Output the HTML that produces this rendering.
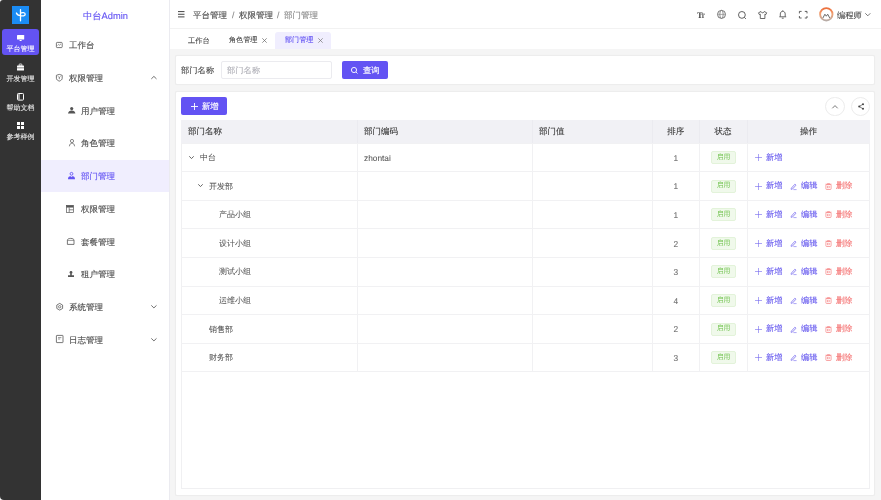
<!DOCTYPE html>
<html><head><meta charset="utf-8">
<style>
*{box-sizing:border-box;margin:0;padding:0}
html,body{width:881px;height:500px;overflow:hidden;background:#f5f5f5;font-family:"Liberation Sans",sans-serif;color:#606266}
.a{position:absolute}
.t{position:absolute;white-space:nowrap;line-height:1;text-rendering:geometricPrecision;-webkit-text-stroke:0.12px currentColor;will-change:transform}
svg{position:absolute;overflow:visible}
.card{position:absolute;background:#fff;border:1px solid #ededed;border-radius:2px;box-shadow:0 0 1px rgba(0,0,0,0.04)}
</style></head><body>

<div class="a" style="left:0;top:0;width:41px;height:500px;background:#fff"></div>
<div class="a" style="left:0;top:0;width:41px;height:500px;background:#333;border-radius:3px 0 0 4px"></div>
<div class="a" style="left:11.5px;top:5.5px;width:17.5px;height:18px;background:#1b8cf5"></div>
<svg style="left:11.5px;top:5.5px" width="17.5" height="18" viewBox="0 0 17.5 18"><path d="M8.5 3.6V14.8M4.4 7Q5.2 9.6 8.5 9.6M8.5 7.2C10 6.2 13.2 6.2 13.2 8.2 13.2 10 10.5 10.2 8.5 9.6" fill="none" stroke="#fff" stroke-width="1.3" stroke-linecap="round"/></svg>
<div class="a" style="left:2px;top:29px;width:37px;height:26px;background:#6353f3;border-radius:3px"></div>
<div class="t" style="left:0px;top:45.76px;font-size:7px;color:#fff;width:41px;text-align:center;-webkit-text-stroke:0.08px currentColor">平台管理</div>
<div class="t" style="left:0px;top:75.96px;font-size:7px;color:#ececec;width:41px;text-align:center;-webkit-text-stroke:0.08px currentColor">开发管理</div>
<div class="t" style="left:0px;top:104.56px;font-size:7px;color:#ececec;width:41px;text-align:center;-webkit-text-stroke:0.08px currentColor">帮助文档</div>
<div class="t" style="left:0px;top:133.86px;font-size:7px;color:#ececec;width:41px;text-align:center;-webkit-text-stroke:0.08px currentColor">参考样例</div>
<svg style="left:16.8px;top:34.6px" width="7.2" height="6"><rect x="0" y="0" width="7.2" height="4.6" rx="0.6" fill="#fff"/><rect x="2.6" y="5" width="2" height="1" fill="#fff"/></svg>
<svg style="left:17px;top:64.3px" width="7" height="6.5"><rect x="0" y="1.6" width="7" height="4.9" rx="0.6" fill="#fff"/><rect x="2.2" y="0" width="2.6" height="2" rx="0.4" fill="none" stroke="#fff" stroke-width="0.8"/><rect x="0" y="3.6" width="7" height="0.6" fill="#323232"/></svg>
<svg style="left:17px;top:93px" width="7" height="7.6"><rect x="0.5" y="0.5" width="6" height="6.6" rx="0.8" fill="none" stroke="#fff" stroke-width="1"/><rect x="1.5" y="1" width="1" height="5.6" fill="#fff"/></svg>
<svg style="left:17px;top:121.5px" width="7" height="7"><rect x="0" y="0" width="3" height="3" fill="#fff"/><rect x="4" y="0" width="3" height="3" fill="#fff"/><rect x="0" y="4" width="3" height="3" fill="#fff"/><rect x="4" y="4" width="3" height="3" fill="#fff"/></svg>
<div class="a" style="left:41px;top:0;width:129px;height:500px;background:#fff;border-right:1px solid #ebebf0"></div>
<div class="t" style="left:82.8px;top:11.69px;font-size:9.3px;color:#6353f3;">中台Admin</div>
<div class="t" style="left:69.2px;top:41.33px;font-size:8.5px;color:#4a4a4a;">工作台</div>
<svg style="left:56.2px;top:41.9px" width="6.6" height="6"><rect x="0.4" y="0.4" width="5.8" height="5.2" rx="0.8" fill="none" stroke="#555" stroke-width="0.8"/><path d="M1.6 3.6L2.6 2.4L3.6 3.2L5 1.8" fill="none" stroke="#555" stroke-width="0.6"/></svg>
<div class="t" style="left:69.2px;top:74.05px;font-size:8.5px;color:#4a4a4a;">权限管理</div>
<svg style="left:56.2px;top:73.9px" width="6.6" height="7.4"><path d="M3.3 0.4L6.2 1.3V4.3C6.2 5.6 4.9 6.6 3.3 7.1 1.7 6.6 0.4 5.6 0.4 4.3V1.3Z" fill="none" stroke="#555" stroke-width="0.8"/><path d="M2.2 2.4L3.3 3.6L4.4 2.4M3.3 3.6V5.2" fill="none" stroke="#555" stroke-width="0.7"/></svg>
<svg style="left:151px;top:76.0px" width="5.8" height="3.3"><path d="M0.3 2.9L2.9 0.4L5.5 2.9" fill="none" stroke="#555" stroke-width="0.85"/></svg>
<div class="t" style="left:81.2px;top:106.77px;font-size:8.5px;color:#4a4a4a;">用户管理</div>
<svg style="left:67.6px;top:107.0px" width="7.4" height="6.6"><circle cx="3.7" cy="1.6" r="1.6" fill="#555"/><path d="M0 6.6C0.3 4.6 1.6 3.6 3.7 3.6 5.8 3.6 7.1 4.6 7.4 6.6Z" fill="#555"/></svg>
<div class="t" style="left:81.2px;top:139.49px;font-size:8.5px;color:#4a4a4a;">角色管理</div>
<svg style="left:68.5px;top:139.4px" width="6" height="7.5"><circle cx="3" cy="2" r="1.6" fill="none" stroke="#555" stroke-width="0.7"/><path d="M0.4 7.3C0.6 5.2 1.6 4.2 3 4.2 4.4 4.2 5.4 5.2 5.6 7.3" fill="none" stroke="#555" stroke-width="0.7"/></svg>
<div class="a" style="left:41px;top:160px;width:128px;height:32px;background:#f0eefe"></div>
<div class="t" style="left:81.2px;top:172.21px;font-size:8.5px;color:#6353f3;">部门管理</div>
<svg style="left:67.8px;top:172.2px" width="7" height="7.2"><circle cx="3.5" cy="1.8" r="1.4" fill="none" stroke="#6353f3" stroke-width="0.9"/><path d="M0 7.2C0 5.2 0.8 4.2 2.1 4.2 2.9 4.2 3.3 4.7 3.5 5.2 3.7 4.7 4.1 4.2 4.9 4.2 6.2 4.2 7 5.2 7 7.2Z" fill="#6353f3"/></svg>
<div class="t" style="left:81.2px;top:204.93px;font-size:8.5px;color:#4a4a4a;">权限管理</div>
<svg style="left:66.3px;top:204.7px" width="7.7" height="7.7"><rect x="0.35" y="0.35" width="7" height="7" fill="none" stroke="#555" stroke-width="0.7"/><rect x="0.35" y="0.35" width="7" height="2.2" fill="#555"/><path d="M3.2 2.5V7.3M3.2 4.8H7.3" stroke="#555" stroke-width="0.7"/></svg>
<div class="t" style="left:81.2px;top:237.65px;font-size:8.5px;color:#4a4a4a;">套餐管理</div>
<svg style="left:67px;top:237.8px" width="7.4" height="6.8"><path d="M0.4 2.2C0.4 1.2 1.6 0.4 3.7 0.4 5.8 0.4 7 1.2 7 2.2V6.4H0.4Z" fill="none" stroke="#555" stroke-width="0.8"/><path d="M0.4 2.4H7" stroke="#555" stroke-width="0.6"/></svg>
<div class="t" style="left:81.2px;top:270.37px;font-size:8.5px;color:#4a4a4a;">租户管理</div>
<svg style="left:68px;top:270.9px" width="6" height="6"><circle cx="3" cy="1.5" r="1.4" fill="#555"/><path d="M2.2 2.6H3.8V4.2H6V6H0V4.2H2.2Z" fill="#555"/></svg>
<div class="t" style="left:69.2px;top:303.09px;font-size:8.5px;color:#4a4a4a;">系统管理</div>
<svg style="left:55.8px;top:302.9px" width="7.4" height="7.5"><path d="M3.7 0.4L6.6 2.05V5.45L3.7 7.1L0.8 5.45V2.05Z" fill="none" stroke="#555" stroke-width="0.8"/><circle cx="3.7" cy="3.75" r="1.2" fill="none" stroke="#555" stroke-width="0.7"/></svg>
<svg style="left:151px;top:305.1px" width="5.8" height="3.3"><path d="M0.3 0.4L2.9 2.9L5.5 0.4" fill="none" stroke="#555" stroke-width="0.85"/></svg>
<div class="t" style="left:69.2px;top:335.81px;font-size:8.5px;color:#4a4a4a;">日志管理</div>
<svg style="left:55.8px;top:335.4px" width="7.4" height="8"><rect x="0.4" y="0.4" width="6.6" height="7.2" rx="0.5" fill="none" stroke="#555" stroke-width="0.8"/><path d="M2 2.6H5.4M2 4H4.2" stroke="#555" stroke-width="0.6"/></svg>
<svg style="left:151px;top:337.8px" width="5.8" height="3.3"><path d="M0.3 0.4L2.9 2.9L5.5 0.4" fill="none" stroke="#555" stroke-width="0.85"/></svg>
<div class="a" style="left:170px;top:0;width:711px;height:29px;background:#fff;border-bottom:1px solid #f2f2f2"></div>
<svg style="left:178px;top:11.2px" width="6.5" height="6.5"><path d="M0 0.6H6.5M0 3.25H6.5M0 5.9H6.5" stroke="#444" stroke-width="1"/></svg>
<div class="t" style="left:193px;top:10.53px;font-size:8.5px;color:#4a4a4a;">平台管理</div>
<div class="t" style="left:231.5px;top:10.53px;font-size:8.5px;color:#888;">/</div>
<div class="t" style="left:239px;top:10.53px;font-size:8.5px;color:#4a4a4a;">权限管理</div>
<div class="t" style="left:277.2px;top:10.53px;font-size:8.5px;color:#888;">/</div>
<div class="t" style="left:284px;top:10.53px;font-size:8.5px;color:#8a8a8a;">部门管理</div>
<div class="t" style="left:696.5px;top:11.3px;font-family:'Liberation Serif',serif;font-weight:bold;font-size:8.5px;color:#444;-webkit-text-stroke:0"><span style="letter-spacing:-1.9px">T</span><span style="font-size:6.5px">T</span></div>
<svg style="left:717px;top:10.4px" width="9" height="9"><circle cx="4.5" cy="4.4" r="4" fill="none" stroke="#666" stroke-width="0.9"/><ellipse cx="4.5" cy="4.4" rx="1.7" ry="4" fill="none" stroke="#777" stroke-width="0.8"/><path d="M0.6 4.4H8.4" stroke="#888" stroke-width="0.7"/></svg>
<svg style="left:737.7px;top:10.6px" width="8.5" height="8.5"><circle cx="3.9" cy="3.9" r="3.4" fill="none" stroke="#444" stroke-width="0.85"/><path d="M6.4 6.4L7.9 7.9" stroke="#444" stroke-width="0.85"/></svg>
<svg style="left:758px;top:10.6px" width="9.2" height="8"><path d="M3 0.5L0.5 1.8L1.4 3.6L2.3 3.2V7.5H6.9V3.2L7.8 3.6L8.7 1.8L6.2 0.5C5.9 1.4 5.3 1.8 4.6 1.8 3.9 1.8 3.3 1.4 3 0.5Z" fill="none" stroke="#444" stroke-width="0.8" stroke-linejoin="round"/></svg>
<svg style="left:779px;top:10px" width="7.5" height="8.8"><path d="M3.75 0.4V1.2M1.3 6.6V4C1.3 2.4 2.3 1.3 3.75 1.3 5.2 1.3 6.2 2.4 6.2 4V6.6M0.3 6.8H7.2M2.8 8.2H4.7" fill="none" stroke="#444" stroke-width="0.8"/></svg>
<svg style="left:798.8px;top:10.8px" width="8.4" height="7.4"><path d="M0.4 2.4V0.4H2.6M5.8 0.4H8V2.4M8 5V7H5.8M2.6 7H0.4V5" fill="none" stroke="#444" stroke-width="0.85"/></svg>
<svg style="left:819px;top:6.6px" width="14.6" height="14.6" viewBox="0 0 14.6 14.6"><defs><linearGradient id="ag" x1="0" y1="0" x2="0" y2="1"><stop offset="0" stop-color="#ec6f3c"/><stop offset="0.45" stop-color="#f3a070"/><stop offset="1" stop-color="#b8aca6"/></linearGradient></defs><circle cx="7.3" cy="7.3" r="6.2" fill="#fff" stroke="url(#ag)" stroke-width="1.9"/><path d="M3.9 11L5.9 7.2L7.3 9.2L8.7 7.2L10.7 11" fill="none" stroke="#6a6a6a" stroke-width="1"/></svg>
<div class="t" style="left:837px;top:11.41px;font-size:8.3px;color:#4a4a4a;">编程师</div>
<svg style="left:865.4px;top:12.5px" width="5.6" height="3.2"><path d="M0.3 0.3L2.8 2.8L5.3 0.3" fill="none" stroke="#555" stroke-width="0.8"/></svg>
<div class="a" style="left:170px;top:29px;width:711px;height:20px;background:#fff"></div>
<div class="t" style="left:188.4px;top:36.98px;font-size:7.2px;color:#4a4a4a;">工作台</div>
<div class="t" style="left:229.4px;top:37.02px;font-size:7.1px;color:#4a4a4a;">角色管理</div>
<svg style="left:262px;top:37.6px" width="5" height="5"><path d="M0.3 0.3L4.7 4.7M4.7 0.3L0.3 4.7" stroke="#666" stroke-width="0.7"/></svg>
<div class="a" style="left:275px;top:32px;width:56px;height:17px;background:#f0eefe;border-radius:3px 3px 0 0"></div>
<div class="t" style="left:285px;top:37.02px;font-size:7.1px;color:#6353f3;">部门管理</div>
<svg style="left:318.1px;top:37.6px" width="5" height="5"><path d="M0.3 0.3L4.7 4.7M4.7 0.3L0.3 4.7" stroke="#777" stroke-width="0.7"/></svg>
<div class="card" style="left:175px;top:54.5px;width:700px;height:30.5px"></div>
<div class="t" style="left:181px;top:66.11px;font-size:8.3px;color:#4a4a4a;">部门名称</div>
<div class="a" style="left:221px;top:61px;width:111px;height:18px;border:1px solid #ebebef;border-radius:2px;background:#fff"></div>
<div class="t" style="left:226.7px;top:66.31px;font-size:8.3px;color:#b0b0b8;">部门名称</div>
<div class="a" style="left:342px;top:61px;width:46px;height:18px;background:#6353f3;border-radius:2px"></div>
<svg style="left:351px;top:66.5px" width="7" height="7"><circle cx="3" cy="3" r="2.6" fill="none" stroke="#fff" stroke-width="0.9"/><path d="M5 5L6.5 6.5" stroke="#fff" stroke-width="0.9"/></svg>
<div class="t" style="left:362.8px;top:66.31px;font-size:8.3px;color:#fff;-webkit-text-stroke:0.15px #fff">查询</div>
<div class="card" style="left:175px;top:90.5px;width:700px;height:405px"></div>
<div class="a" style="left:181px;top:97px;width:46px;height:18px;background:#6353f3;border-radius:2px"></div>
<svg style="left:190.6px;top:102.6px" width="7" height="7"><path d="M3.5 0V7M0 3.5H7" stroke="#fff" stroke-width="0.9"/></svg>
<div class="t" style="left:201.9px;top:102.01px;font-size:8.3px;color:#fff;-webkit-text-stroke:0.15px #fff">新增</div>
<div class="a" style="left:825.4px;top:96.7px;width:19.2px;height:19.2px;border:1px solid #ececec;border-radius:50%;background:#fff"></div>
<div class="a" style="left:851.0px;top:96.7px;width:19.2px;height:19.2px;border:1px solid #ececec;border-radius:50%;background:#fff"></div>
<svg style="left:832px;top:104.5px" width="6" height="4"><path d="M0.3 3.3L3 0.6L5.7 3.3" fill="none" stroke="#555" stroke-width="0.8"/></svg>
<svg style="left:857.5px;top:103px" width="6.5" height="7"><circle cx="5" cy="1.2" r="1" fill="#444"/><circle cx="1.2" cy="3.5" r="1" fill="#444"/><circle cx="5" cy="5.8" r="1" fill="#444"/><path d="M5 1.2L1.2 3.5L5 5.8" fill="none" stroke="#444" stroke-width="0.7"/></svg>
<div class="a" style="left:181px;top:120px;width:689px;height:369px;border:1px solid #f0f0f2;background:#fff"></div>
<div class="a" style="left:181px;top:120px;width:689px;height:23px;background:#f1f1f5"></div>
<div class="a" style="left:356.5px;top:143px;width:1px;height:228.8px;background:#f1f1f3"></div>
<div class="a" style="left:356.5px;top:120px;width:1px;height:23px;background:#ebebf0"></div>
<div class="a" style="left:531.5px;top:143px;width:1px;height:228.8px;background:#f1f1f3"></div>
<div class="a" style="left:531.5px;top:120px;width:1px;height:23px;background:#ebebf0"></div>
<div class="a" style="left:651.5px;top:143px;width:1px;height:228.8px;background:#f1f1f3"></div>
<div class="a" style="left:651.5px;top:120px;width:1px;height:23px;background:#ebebf0"></div>
<div class="a" style="left:699px;top:143px;width:1px;height:228.8px;background:#f1f1f3"></div>
<div class="a" style="left:699px;top:120px;width:1px;height:23px;background:#ebebf0"></div>
<div class="a" style="left:747px;top:143px;width:1px;height:228.8px;background:#f1f1f3"></div>
<div class="a" style="left:747px;top:120px;width:1px;height:23px;background:#ebebf0"></div>
<div class="a" style="left:181px;top:142.5px;width:689px;height:1px;background:#f1f1f3"></div>
<div class="a" style="left:181px;top:171.1px;width:689px;height:1px;background:#f1f1f3"></div>
<div class="a" style="left:181px;top:199.7px;width:689px;height:1px;background:#f1f1f3"></div>
<div class="a" style="left:181px;top:228.3px;width:689px;height:1px;background:#f1f1f3"></div>
<div class="a" style="left:181px;top:256.9px;width:689px;height:1px;background:#f1f1f3"></div>
<div class="a" style="left:181px;top:285.5px;width:689px;height:1px;background:#f1f1f3"></div>
<div class="a" style="left:181px;top:314.1px;width:689px;height:1px;background:#f1f1f3"></div>
<div class="a" style="left:181px;top:342.7px;width:689px;height:1px;background:#f1f1f3"></div>
<div class="a" style="left:181px;top:371.3px;width:689px;height:1px;background:#f1f1f3"></div>
<div class="t" style="left:187.8px;top:127.13px;font-size:8.5px;color:#3a3a3a;">部门名称</div>
<div class="t" style="left:364px;top:127.13px;font-size:8.5px;color:#3a3a3a;">部门编码</div>
<div class="t" style="left:538.8px;top:127.13px;font-size:8.5px;color:#3a3a3a;">部门值</div>
<div class="t" style="left:651.5px;top:127.13px;font-size:8.5px;color:#3a3a3a;width:47.5px;text-align:center;">排序</div>
<div class="t" style="left:699px;top:127.13px;font-size:8.5px;color:#3a3a3a;width:48px;text-align:center;">状态</div>
<div class="t" style="left:747px;top:127.13px;font-size:8.5px;color:#3a3a3a;width:123px;text-align:center;">操作</div>
<div class="t" style="left:200.0px;top:153.94px;font-size:8px;color:#555;-webkit-text-stroke:0.05px currentColor">中台</div>
<svg style="left:188.8px;top:155.8px" width="5" height="3"><path d="M0.3 0.3L2.5 2.6L4.7 0.3" fill="none" stroke="#666" stroke-width="1"/></svg>
<div class="t" style="left:364px;top:153.81px;font-size:8.3px;color:#555;-webkit-text-stroke:0.05px currentColor">zhontai</div>
<div class="t" style="left:651.5px;top:153.81px;font-size:8.3px;color:#666;width:47.5px;text-align:center;-webkit-text-stroke:0.05px currentColor">1</div>
<div class="a" style="left:711px;top:151.0px;width:25px;height:13px;background:#f0f9eb;border:1px solid #e3f3da;border-radius:2px"></div>
<div class="t" style="left:711px;top:154.84px;font-size:6.8px;color:#6ac046;width:25px;text-align:center;-webkit-text-stroke:0">启用</div>
<svg style="left:755px;top:154.0px" width="7" height="7"><path d="M3.5 0V7M0 3.5H7" stroke="#7468ee" stroke-width="0.6"/></svg>
<div class="t" style="left:766.3px;top:153.86px;font-size:8.2px;color:#6558ee;-webkit-text-stroke:0.1px currentColor">新增</div>
<div class="t" style="left:209.4px;top:182.54px;font-size:8px;color:#555;-webkit-text-stroke:0.05px currentColor">开发部</div>
<svg style="left:198.2px;top:184.4px" width="5" height="3"><path d="M0.3 0.3L2.5 2.6L4.7 0.3" fill="none" stroke="#666" stroke-width="1"/></svg>
<div class="t" style="left:651.5px;top:182.41px;font-size:8.3px;color:#666;width:47.5px;text-align:center;-webkit-text-stroke:0.05px currentColor">1</div>
<div class="a" style="left:711px;top:179.6px;width:25px;height:13px;background:#f0f9eb;border:1px solid #e3f3da;border-radius:2px"></div>
<div class="t" style="left:711px;top:183.44px;font-size:6.8px;color:#6ac046;width:25px;text-align:center;-webkit-text-stroke:0">启用</div>
<svg style="left:755px;top:182.6px" width="7" height="7"><path d="M3.5 0V7M0 3.5H7" stroke="#7468ee" stroke-width="0.6"/></svg>
<div class="t" style="left:766.3px;top:182.46px;font-size:8.2px;color:#6558ee;-webkit-text-stroke:0.1px currentColor">新增</div>
<svg style="left:790px;top:182.5px" width="7" height="7"><path d="M1.3 5.2L4.9 1.2L6 2.2L2.4 6.1L1.1 6.3Z" fill="none" stroke="#7468ee" stroke-width="0.75"/><path d="M3.4 6.6H6.6" stroke="#7468ee" stroke-width="0.6"/></svg>
<div class="t" style="left:800.8px;top:182.46px;font-size:8.2px;color:#6558ee;-webkit-text-stroke:0.1px currentColor">编辑</div>
<svg style="left:825.4px;top:182.5px" width="7" height="7"><path d="M0.4 1.2H6.6M2.5 1.2V0.5H4.5V1.2" fill="none" stroke="#f58080" stroke-width="0.6"/><rect x="0.9" y="1.5" width="5.2" height="5" rx="0.8" fill="none" stroke="#f58080" stroke-width="0.7"/><rect x="2.4" y="3.1" width="2.2" height="1.8" fill="none" stroke="#f58080" stroke-width="0.5"/></svg>
<div class="t" style="left:836.1px;top:182.46px;font-size:8.2px;color:#f47474;-webkit-text-stroke:0.1px currentColor">删除</div>
<div class="t" style="left:218.8px;top:211.14px;font-size:8px;color:#555;-webkit-text-stroke:0.05px currentColor">产品小组</div>
<div class="t" style="left:651.5px;top:211.01px;font-size:8.3px;color:#666;width:47.5px;text-align:center;-webkit-text-stroke:0.05px currentColor">1</div>
<div class="a" style="left:711px;top:208.2px;width:25px;height:13px;background:#f0f9eb;border:1px solid #e3f3da;border-radius:2px"></div>
<div class="t" style="left:711px;top:212.04px;font-size:6.8px;color:#6ac046;width:25px;text-align:center;-webkit-text-stroke:0">启用</div>
<svg style="left:755px;top:211.2px" width="7" height="7"><path d="M3.5 0V7M0 3.5H7" stroke="#7468ee" stroke-width="0.6"/></svg>
<div class="t" style="left:766.3px;top:211.06px;font-size:8.2px;color:#6558ee;-webkit-text-stroke:0.1px currentColor">新增</div>
<svg style="left:790px;top:211.1px" width="7" height="7"><path d="M1.3 5.2L4.9 1.2L6 2.2L2.4 6.1L1.1 6.3Z" fill="none" stroke="#7468ee" stroke-width="0.75"/><path d="M3.4 6.6H6.6" stroke="#7468ee" stroke-width="0.6"/></svg>
<div class="t" style="left:800.8px;top:211.06px;font-size:8.2px;color:#6558ee;-webkit-text-stroke:0.1px currentColor">编辑</div>
<svg style="left:825.4px;top:211.1px" width="7" height="7"><path d="M0.4 1.2H6.6M2.5 1.2V0.5H4.5V1.2" fill="none" stroke="#f58080" stroke-width="0.6"/><rect x="0.9" y="1.5" width="5.2" height="5" rx="0.8" fill="none" stroke="#f58080" stroke-width="0.7"/><rect x="2.4" y="3.1" width="2.2" height="1.8" fill="none" stroke="#f58080" stroke-width="0.5"/></svg>
<div class="t" style="left:836.1px;top:211.06px;font-size:8.2px;color:#f47474;-webkit-text-stroke:0.1px currentColor">删除</div>
<div class="t" style="left:218.8px;top:239.74px;font-size:8px;color:#555;-webkit-text-stroke:0.05px currentColor">设计小组</div>
<div class="t" style="left:651.5px;top:239.61px;font-size:8.3px;color:#666;width:47.5px;text-align:center;-webkit-text-stroke:0.05px currentColor">2</div>
<div class="a" style="left:711px;top:236.8px;width:25px;height:13px;background:#f0f9eb;border:1px solid #e3f3da;border-radius:2px"></div>
<div class="t" style="left:711px;top:240.64px;font-size:6.8px;color:#6ac046;width:25px;text-align:center;-webkit-text-stroke:0">启用</div>
<svg style="left:755px;top:239.8px" width="7" height="7"><path d="M3.5 0V7M0 3.5H7" stroke="#7468ee" stroke-width="0.6"/></svg>
<div class="t" style="left:766.3px;top:239.66px;font-size:8.2px;color:#6558ee;-webkit-text-stroke:0.1px currentColor">新增</div>
<svg style="left:790px;top:239.7px" width="7" height="7"><path d="M1.3 5.2L4.9 1.2L6 2.2L2.4 6.1L1.1 6.3Z" fill="none" stroke="#7468ee" stroke-width="0.75"/><path d="M3.4 6.6H6.6" stroke="#7468ee" stroke-width="0.6"/></svg>
<div class="t" style="left:800.8px;top:239.66px;font-size:8.2px;color:#6558ee;-webkit-text-stroke:0.1px currentColor">编辑</div>
<svg style="left:825.4px;top:239.7px" width="7" height="7"><path d="M0.4 1.2H6.6M2.5 1.2V0.5H4.5V1.2" fill="none" stroke="#f58080" stroke-width="0.6"/><rect x="0.9" y="1.5" width="5.2" height="5" rx="0.8" fill="none" stroke="#f58080" stroke-width="0.7"/><rect x="2.4" y="3.1" width="2.2" height="1.8" fill="none" stroke="#f58080" stroke-width="0.5"/></svg>
<div class="t" style="left:836.1px;top:239.66px;font-size:8.2px;color:#f47474;-webkit-text-stroke:0.1px currentColor">删除</div>
<div class="t" style="left:218.8px;top:268.34px;font-size:8px;color:#555;-webkit-text-stroke:0.05px currentColor">测试小组</div>
<div class="t" style="left:651.5px;top:268.21px;font-size:8.3px;color:#666;width:47.5px;text-align:center;-webkit-text-stroke:0.05px currentColor">3</div>
<div class="a" style="left:711px;top:265.4px;width:25px;height:13px;background:#f0f9eb;border:1px solid #e3f3da;border-radius:2px"></div>
<div class="t" style="left:711px;top:269.24px;font-size:6.8px;color:#6ac046;width:25px;text-align:center;-webkit-text-stroke:0">启用</div>
<svg style="left:755px;top:268.4px" width="7" height="7"><path d="M3.5 0V7M0 3.5H7" stroke="#7468ee" stroke-width="0.6"/></svg>
<div class="t" style="left:766.3px;top:268.26px;font-size:8.2px;color:#6558ee;-webkit-text-stroke:0.1px currentColor">新增</div>
<svg style="left:790px;top:268.3px" width="7" height="7"><path d="M1.3 5.2L4.9 1.2L6 2.2L2.4 6.1L1.1 6.3Z" fill="none" stroke="#7468ee" stroke-width="0.75"/><path d="M3.4 6.6H6.6" stroke="#7468ee" stroke-width="0.6"/></svg>
<div class="t" style="left:800.8px;top:268.26px;font-size:8.2px;color:#6558ee;-webkit-text-stroke:0.1px currentColor">编辑</div>
<svg style="left:825.4px;top:268.3px" width="7" height="7"><path d="M0.4 1.2H6.6M2.5 1.2V0.5H4.5V1.2" fill="none" stroke="#f58080" stroke-width="0.6"/><rect x="0.9" y="1.5" width="5.2" height="5" rx="0.8" fill="none" stroke="#f58080" stroke-width="0.7"/><rect x="2.4" y="3.1" width="2.2" height="1.8" fill="none" stroke="#f58080" stroke-width="0.5"/></svg>
<div class="t" style="left:836.1px;top:268.26px;font-size:8.2px;color:#f47474;-webkit-text-stroke:0.1px currentColor">删除</div>
<div class="t" style="left:218.8px;top:296.94px;font-size:8px;color:#555;-webkit-text-stroke:0.05px currentColor">运维小组</div>
<div class="t" style="left:651.5px;top:296.81px;font-size:8.3px;color:#666;width:47.5px;text-align:center;-webkit-text-stroke:0.05px currentColor">4</div>
<div class="a" style="left:711px;top:294.0px;width:25px;height:13px;background:#f0f9eb;border:1px solid #e3f3da;border-radius:2px"></div>
<div class="t" style="left:711px;top:297.84px;font-size:6.8px;color:#6ac046;width:25px;text-align:center;-webkit-text-stroke:0">启用</div>
<svg style="left:755px;top:297.0px" width="7" height="7"><path d="M3.5 0V7M0 3.5H7" stroke="#7468ee" stroke-width="0.6"/></svg>
<div class="t" style="left:766.3px;top:296.86px;font-size:8.2px;color:#6558ee;-webkit-text-stroke:0.1px currentColor">新增</div>
<svg style="left:790px;top:296.9px" width="7" height="7"><path d="M1.3 5.2L4.9 1.2L6 2.2L2.4 6.1L1.1 6.3Z" fill="none" stroke="#7468ee" stroke-width="0.75"/><path d="M3.4 6.6H6.6" stroke="#7468ee" stroke-width="0.6"/></svg>
<div class="t" style="left:800.8px;top:296.86px;font-size:8.2px;color:#6558ee;-webkit-text-stroke:0.1px currentColor">编辑</div>
<svg style="left:825.4px;top:296.9px" width="7" height="7"><path d="M0.4 1.2H6.6M2.5 1.2V0.5H4.5V1.2" fill="none" stroke="#f58080" stroke-width="0.6"/><rect x="0.9" y="1.5" width="5.2" height="5" rx="0.8" fill="none" stroke="#f58080" stroke-width="0.7"/><rect x="2.4" y="3.1" width="2.2" height="1.8" fill="none" stroke="#f58080" stroke-width="0.5"/></svg>
<div class="t" style="left:836.1px;top:296.86px;font-size:8.2px;color:#f47474;-webkit-text-stroke:0.1px currentColor">删除</div>
<div class="t" style="left:209.4px;top:325.54px;font-size:8px;color:#555;-webkit-text-stroke:0.05px currentColor">销售部</div>
<div class="t" style="left:651.5px;top:325.41px;font-size:8.3px;color:#666;width:47.5px;text-align:center;-webkit-text-stroke:0.05px currentColor">2</div>
<div class="a" style="left:711px;top:322.6px;width:25px;height:13px;background:#f0f9eb;border:1px solid #e3f3da;border-radius:2px"></div>
<div class="t" style="left:711px;top:326.44px;font-size:6.8px;color:#6ac046;width:25px;text-align:center;-webkit-text-stroke:0">启用</div>
<svg style="left:755px;top:325.6px" width="7" height="7"><path d="M3.5 0V7M0 3.5H7" stroke="#7468ee" stroke-width="0.6"/></svg>
<div class="t" style="left:766.3px;top:325.46px;font-size:8.2px;color:#6558ee;-webkit-text-stroke:0.1px currentColor">新增</div>
<svg style="left:790px;top:325.5px" width="7" height="7"><path d="M1.3 5.2L4.9 1.2L6 2.2L2.4 6.1L1.1 6.3Z" fill="none" stroke="#7468ee" stroke-width="0.75"/><path d="M3.4 6.6H6.6" stroke="#7468ee" stroke-width="0.6"/></svg>
<div class="t" style="left:800.8px;top:325.46px;font-size:8.2px;color:#6558ee;-webkit-text-stroke:0.1px currentColor">编辑</div>
<svg style="left:825.4px;top:325.5px" width="7" height="7"><path d="M0.4 1.2H6.6M2.5 1.2V0.5H4.5V1.2" fill="none" stroke="#f58080" stroke-width="0.6"/><rect x="0.9" y="1.5" width="5.2" height="5" rx="0.8" fill="none" stroke="#f58080" stroke-width="0.7"/><rect x="2.4" y="3.1" width="2.2" height="1.8" fill="none" stroke="#f58080" stroke-width="0.5"/></svg>
<div class="t" style="left:836.1px;top:325.46px;font-size:8.2px;color:#f47474;-webkit-text-stroke:0.1px currentColor">删除</div>
<div class="t" style="left:209.4px;top:354.14px;font-size:8px;color:#555;-webkit-text-stroke:0.05px currentColor">财务部</div>
<div class="t" style="left:651.5px;top:354.01px;font-size:8.3px;color:#666;width:47.5px;text-align:center;-webkit-text-stroke:0.05px currentColor">3</div>
<div class="a" style="left:711px;top:351.2px;width:25px;height:13px;background:#f0f9eb;border:1px solid #e3f3da;border-radius:2px"></div>
<div class="t" style="left:711px;top:355.04px;font-size:6.8px;color:#6ac046;width:25px;text-align:center;-webkit-text-stroke:0">启用</div>
<svg style="left:755px;top:354.2px" width="7" height="7"><path d="M3.5 0V7M0 3.5H7" stroke="#7468ee" stroke-width="0.6"/></svg>
<div class="t" style="left:766.3px;top:354.06px;font-size:8.2px;color:#6558ee;-webkit-text-stroke:0.1px currentColor">新增</div>
<svg style="left:790px;top:354.1px" width="7" height="7"><path d="M1.3 5.2L4.9 1.2L6 2.2L2.4 6.1L1.1 6.3Z" fill="none" stroke="#7468ee" stroke-width="0.75"/><path d="M3.4 6.6H6.6" stroke="#7468ee" stroke-width="0.6"/></svg>
<div class="t" style="left:800.8px;top:354.06px;font-size:8.2px;color:#6558ee;-webkit-text-stroke:0.1px currentColor">编辑</div>
<svg style="left:825.4px;top:354.1px" width="7" height="7"><path d="M0.4 1.2H6.6M2.5 1.2V0.5H4.5V1.2" fill="none" stroke="#f58080" stroke-width="0.6"/><rect x="0.9" y="1.5" width="5.2" height="5" rx="0.8" fill="none" stroke="#f58080" stroke-width="0.7"/><rect x="2.4" y="3.1" width="2.2" height="1.8" fill="none" stroke="#f58080" stroke-width="0.5"/></svg>
<div class="t" style="left:836.1px;top:354.06px;font-size:8.2px;color:#f47474;-webkit-text-stroke:0.1px currentColor">删除</div>
</body></html>
